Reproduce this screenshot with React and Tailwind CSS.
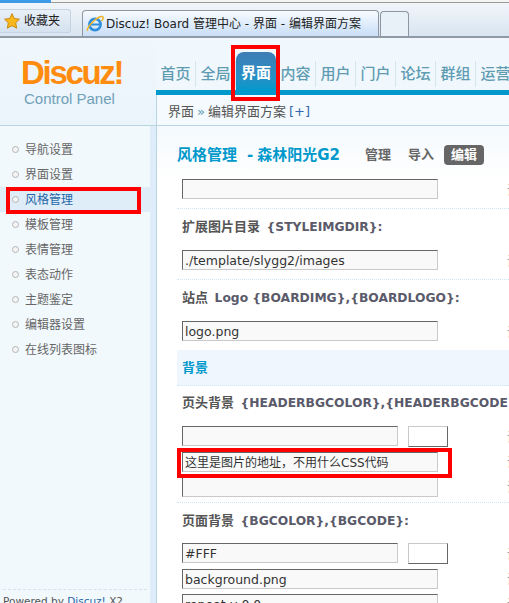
import * as React from 'react';

const font = { fontFamily: '"DejaVu Sans", "Noto Sans CJK SC", sans-serif' };
const sideItems = ['导航设置', '界面设置', '风格管理', '模板管理', '表情管理', '表态动作', '主题鉴定', '编辑器设置', '在线列表图标'];
const navLeft = ['首页', '全局'];
const navRight = ['内容', '用户', '门户', '论坛', '群组', '运营'];

function IeIcon() {
  return (
    <svg width="18" height="18" viewBox="0 0 17 18" className="shrink-0">
      <circle cx="8.5" cy="9.5" r="5.6" fill="none" stroke="#2f8fdc" strokeWidth="2.6" />
      <path d="M3.5 9.5h10" stroke="#2f8fdc" strokeWidth="2" />
      <path d="M1 16c-1-3 6-11 11-13.500 2-1 4-1.500 4.500-.500.500 1.200-.5 3-1.500 4" fill="none" stroke="#f0b428" strokeWidth="1.500" />
    </svg>
  );
}

function Star() {
  return (
    <svg width="16" height="16" viewBox="0 0 24 24" className="shrink-0">
      <path d="M12 1l3.400 7.300 7.800 1-5.700 5.500 1.500 8L12 18.900 5 22.800l1.500-8L.8 9.300l7.800-1z" fill="#f8b81c" stroke="#c98a10" strokeWidth="1.500" />
    </svg>
  );
}

function Field({ value = '', w = 'w-[256px]' }) {
  return (
    <div className={`${w} h-[20px] shrink-0 bg-[#f9f9f9] border border-[#c9c9c9] border-t-[#666] border-l-[#666] pl-[2px] text-[12.500px] leading-[20px] text-[#333] overflow-hidden whitespace-nowrap`}>
      {value}
    </div>
  );
}

function Swatch() {
  return <div className="w-[40px] h-[21px] shrink-0 bg-white border border-[#666] border-t-[#c9c9c9] border-l-[#c9c9c9]" />;
}

function Label({ cn, code }) {
  return (
    <div className="h-[16px] text-[13px] font-bold leading-[16px] text-[#555] whitespace-nowrap">
      {cn} <span className="text-[12.300px] text-[#5a5a6a] ml-[2px]">{code}</span>
    </div>
  );
}

function Row({ children, tip = [] }) {
  return (
    <div className="flex justify-between">
      <div className="flex flex-col gap-[5px]">{children}</div>
      <div className="w-[2px] overflow-hidden text-[12px] text-[#888] flex flex-col gap-[5px] shrink-0">
        {tip.map((t, i) => <span key={i} className="h-[20px] leading-[24px] whitespace-nowrap">{t}</span>)}
      </div>
    </div>
  );
}

export default function App() {
  return (
    <div className="relative w-[509px] h-[603px] overflow-hidden bg-[#f0f7fd]" style={font}>
      {/* browser chrome */}
      <div className="h-[38px] relative border-b-2 border-[#8f9aa5] bg-gradient-to-b from-[#f3f7fb] to-[#d9e5f1]">
        <div className="flex items-center h-[3px] bg-[#f4f4f4] border-b border-[#9a9a9a]">
          <div className="w-[51px] h-[3px] bg-[#3c9be8]" />
        </div>
        <div className="flex items-end h-[33px] pt-[3px]">
          <div className="w-[71px] h-[24px] mb-[3px] flex items-center gap-[4px] pl-[4px] border border-l-0 border-[#c5d3e2] rounded-r-[3px] bg-gradient-to-b from-[#e8f0f8] to-[#d5e2ef] text-[12px] text-[#222]">
            <Star />
            <span>收藏夹</span>
          </div>
          <div className="w-[297px] h-[26px] ml-[11px] flex items-center gap-[2px] pl-[3px] border border-b-0 border-[#8e97a1] rounded-t-[4px] bg-gradient-to-b from-[#f7fbff] to-[#c9def7] text-[12px] text-[#222] whitespace-nowrap overflow-hidden">
            <IeIcon />
            <span>Discuz! Board 管理中心 - 界面 - 编辑界面方案</span>
          </div>
          <div className="w-[29px] h-[25px] ml-[1px] border border-b-0 border-[#8e97a1] rounded-t-[4px] bg-[#e8f0f8]" />
        </div>
      </div>

      {/* header */}
      <div className="flex h-[88px]">
        <div className="w-[156px] shrink-0 flex flex-col pt-[18px] pl-[21px] bg-gradient-to-b from-[#f0f7fd] to-[#eaf4fb] border-b border-[#b9d5e2]">
          <div className="text-[33px] leading-[34px] font-bold text-[#ff8c0f] tracking-[-2.300px]" style={{ fontFamily: '"Liberation Sans", sans-serif' }}>Discuz!</div>
          <div className="text-[15px] leading-[16px] mt-[1px] pl-[3px] text-[#6fa0b8]" style={{ fontFamily: '"Liberation Sans", sans-serif' }}>Control Panel</div>
        </div>
        <div className="flex-1 flex flex-col min-w-0">
          <div className="h-[52px] flex items-end">
            {navLeft.map((n) => (
              <div key={n} className="w-[40px] h-[26px] mb-[3px] shrink-0 flex items-center justify-center text-[15px] font-medium text-[#5f9cb2] border-r border-[#d6e6ef] whitespace-nowrap">{n}</div>
            ))}
            <div className="w-[40px] h-[38px] shrink-0 rounded-t-[8px] pt-[11px] text-center bg-gradient-to-b from-[#3d7db5] to-[#0099cc] text-[15px] leading-[20px] font-bold text-white whitespace-nowrap">界面</div>
            {navRight.map((n) => (
              <div key={n} className="w-[40px] h-[26px] mb-[3px] shrink-0 flex items-center justify-center text-[15px] font-medium text-[#5f9cb2] border-r border-[#d6e6ef] whitespace-nowrap">{n}</div>
            ))}
          </div>
          <div className="h-[5px] bg-[#0099cc]" />
          <div className="h-[31px] flex items-center pl-[11px] pt-[4px] bg-[#f4fafe] border-b border-l border-[#b9d5e2] text-[13px] text-[#555] whitespace-nowrap">
            界面 <span className="mx-[3px] text-[#5f9cb2]">»</span> 编辑界面方案 <span className="ml-[3px] text-[#3366aa]">[+]</span>
          </div>
        </div>
      </div>

      {/* body */}
      <div className="flex h-[477px]">
        <div className="w-[157px] shrink-0 flex flex-col bg-[#f2f9fd] border-r border-[#b9d5e2]">
          <div className="flex-1 flex flex-col border-r-[6px] border-[#deedf9] pt-[11px]">
            {sideItems.map((s) => (
              <div key={s} className={`h-[25px] flex items-center gap-[6px] pl-[12px] text-[12px] ${s === '风格管理' ? 'bg-[#deedf7] text-[#1f66a8]' : 'text-[#666]'}`}>
                <span className="w-[7px] h-[7px] rounded-full border border-[#b5b5b5] bg-[#f4f4f4]" />
                {s}
              </div>
            ))}
            <div className="mt-auto mx-[3px] border-t border-dashed border-[#d8e2e8] h-[14px] text-[10.500px] leading-[12px] pt-[5px] text-[#555] whitespace-nowrap overflow-hidden">
              Powered by <span className="text-[#1f66a8]">Discuz!</span> X2
            </div>
          </div>
        </div>

        <div className="flex-1 bg-white min-w-0 pl-[20px] flex flex-col">
          <div className="h-[53px] shrink-0 flex items-start pt-[17px] bg-gradient-to-b from-[#f4f9fd] to-white -ml-[20px] pl-[20px] whitespace-nowrap">
            <span className="text-[15px] font-bold leading-[24px] text-[#0099cc]">风格管理<span className="ml-[10px] mr-[4px]">-</span>森林阳光G2</span>
            <span className="ml-[25px] text-[13px] font-bold leading-[24px] text-[#666]">管理</span>
            <span className="ml-[17px] text-[13px] font-bold leading-[24px] text-[#666]">导入</span>
            <span className="ml-[10px] mt-[2px] w-[40px] h-[20px] text-center rounded-[4px] bg-[#666] text-white text-[13px] font-bold leading-[20px]">编辑</span>
          </div>

          <div className="pl-[5px] flex flex-col">
            <Row tip={['设']}><Field /></Row>
            <div className="border-t border-dotted border-[#cfe4f2] -ml-[5px] mt-[9px] mb-[10px]" />
            <Label cn="扩展图片目录" code="{STYLEIMGDIR}:" />
            <div className="h-[15px]" />
            <Row tip={['设']}><Field value="./template/slygg2/images" /></Row>
            <div className="border-t border-dotted border-[#cfe4f2] -ml-[5px] mt-[9px] mb-[10px]" />
            <Label cn="站点" code="Logo {BOARDIMG},{BOARDLOGO}:" />
            <div className="h-[15px]" />
            <Row tip={['设']}><Field value="logo.png" /></Row>
            <div className="-ml-[5px] pl-[5px] mt-[9px] h-[36px] flex items-center bg-[#eff6fd] border-b border-dotted border-[#cfe4f2] text-[13px] font-bold text-[#0099cc]">背景</div>
            <div className="h-[9px]" />
            <Label cn="页头背景" code="{HEADERBGCOLOR},{HEADERBGCODE}:" />
            <div className="h-[15px]" />
            <Row tip={['设', '设', '设']}>
              <div className="flex gap-[10px]"><Field w="w-[216px]" /><Swatch /></div>
              <Field value={<span className="text-[12px]">这里是图片的地址，不用什么CSS代码</span>} />
              <Field />
            </Row>
            <div className="border-t border-dotted border-[#cfe4f2] -ml-[5px] mt-[5px] mb-[10px]" />
            <Label cn="页面背景" code="{BGCOLOR},{BGCODE}:" />
            <div className="h-[14px]" />
            <Row tip={['设', '设', '设']}>
              <div className="flex gap-[10px]"><Field w="w-[216px]" value="#FFF" /><Swatch /></div>
              <Field value="background.png" />
              <Field value="repeat-y 0 0" />
            </Row>
          </div>
        </div>
      </div>

      {/* red annotations drawn over the screenshot */}
      <div className="absolute left-[231px] top-[45px] w-[49px] h-[56px] border-[4px] border-[#f00]" />
      <div className="absolute left-[6px] top-[187px] w-[135px] h-[27px] border-[4px] border-[#f00]" />
      <div className="absolute left-[177px] top-[448px] w-[275px] h-[30px] border-[4px] border-[#f00]" />
    </div>
  );
}
